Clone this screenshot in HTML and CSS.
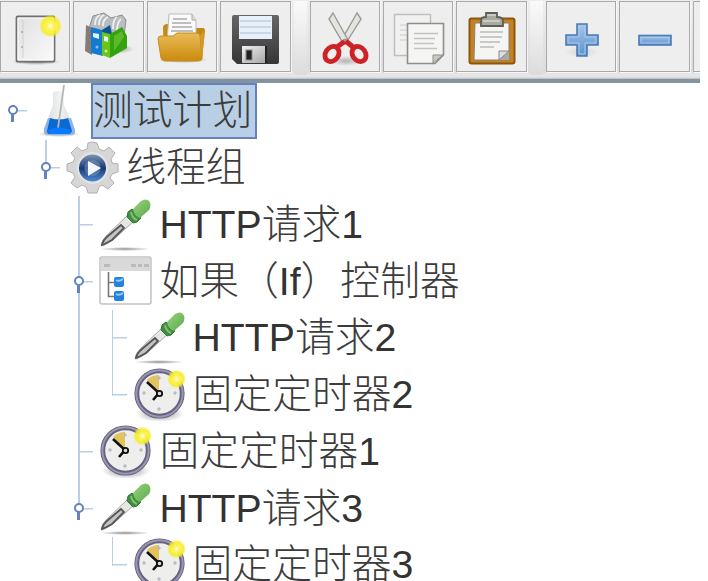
FILE: index.html
```html
<!DOCTYPE html>
<html lang="zh-CN">
<head>
<meta charset="UTF-8">
<meta name="viewport" content="width=device-width, initial-scale=1.0">
<title>测试计划</title>
<link rel="stylesheet" href="styles.css">
</head>
<body>

<svg class="sprites" width="0" height="0">
    <defs>
        <linearGradient id="paper" x1="0" y1="0" x2="1" y2="1"><stop offset="0" stop-color="#e0e0e0"/><stop offset="1" stop-color="#fafafa"/></linearGradient>
        <linearGradient id="dark" x1="0" y1="0" x2="0" y2="1"><stop offset="0" stop-color="#666"/><stop offset="1" stop-color="#363636"/></linearGradient>
        <linearGradient id="gold" x1="0" y1="0" x2="0" y2="1"><stop offset="0" stop-color="#e8bc58"/><stop offset="1" stop-color="#cb8a0c"/></linearGradient>
        <linearGradient id="metal" x1="0" y1="0" x2="1" y2="1"><stop offset="0" stop-color="#f0f0f0"/><stop offset="1" stop-color="#a5a5a5"/></linearGradient>
        <linearGradient id="blue" x1="0" y1="0" x2="0" y2="1"><stop offset="0" stop-color="#a5c5e8"/><stop offset="1" stop-color="#5b92cf"/></linearGradient>
        <linearGradient id="green" x1="0" y1="0" x2="1" y2="1"><stop offset="0" stop-color="#9ad47c"/><stop offset="1" stop-color="#5aa94e"/></linearGradient>
        <linearGradient id="glass" x1="0" y1="0" x2="1" y2="0"><stop offset="0" stop-color="#d5d7d8"/><stop offset=".5" stop-color="#f1f2f2"/><stop offset="1" stop-color="#d9dbdc"/></linearGradient>
        <linearGradient id="navy" x1="0" y1="0" x2="0" y2="1"><stop offset="0" stop-color="#8094b2"/><stop offset=".5" stop-color="#173a74"/><stop offset="1" stop-color="#4d8bd5"/></linearGradient>
        <radialGradient id="glow"><stop offset="0" stop-color="#fffff0"/><stop offset=".3" stop-color="#fff45a"/><stop offset=".75" stop-color="#f7ec28" stop-opacity=".9"/><stop offset="1" stop-color="#f7ec28" stop-opacity="0"/></radialGradient>
        <radialGradient id="shade"><stop offset="0" stop-color="#555" stop-opacity=".65"/><stop offset="1" stop-color="#555" stop-opacity="0"/></radialGradient>
    </defs>
    <symbol id="dropper" viewBox="0 0 53 53">
        <ellipse cx="26" cy="51" rx="25" ry="2" fill="url(#shade)"/>
        <path d="M29 17L35 23L14 42Q9 45 4 48L2 47Q3 42 8 37Z" fill="#e6e6e4" stroke="#aaa" stroke-width="1"/>
        <path d="M22 27L9 38Q4 42 3 47Q8 45 13 42L25 30Z" fill="#c4c4c2" stroke="#555" stroke-width="1.800"/>
        <path d="M29 14L33 11L42 20L38 24L34 25L28 19Z" fill="#3f8d3f" stroke="#35763a"/>
        <path d="M34 11L42 3Q47 0 50 3Q53 7 50 12L41 20Q35 18 34 11Z" fill="url(#green)"/>
        <path d="M32 14Q33 20 38 22" fill="none" stroke="#81bd75" stroke-width="2"/>
    </symbol>
    <symbol id="clock" viewBox="0 0 53 53">
        <ellipse cx="27" cy="46" rx="24" ry="8" fill="url(#shade)"/>
        <circle cx="26.500" cy="25.500" r="22.700" fill="#eeeeec" stroke="#65627f" stroke-width="4.800"/>
        <circle cx="26.500" cy="25.500" r="23.200" fill="none" stroke="#9897b4" stroke-width="2"/>
        <path d="M26 25L14 12Q19 7 26 7Z" fill="#e2c35c"/>
        <g fill="#bbb"><circle cx="26" cy="10" r="1.700"/><circle cx="42" cy="25" r="1.700"/><circle cx="26" cy="41" r="1.700"/><circle cx="11" cy="25" r="1.700"/></g>
        <path d="M14 14L26 25L20 32" fill="none" stroke="#111" stroke-width="2.600"/>
        <circle cx="26.500" cy="25.500" r="2.700" fill="#ddd" stroke="#111" stroke-width="1.800"/>
        <circle cx="43.500" cy="11" r="9.500" fill="url(#glow)"/>
    </symbol>
</svg>

<div class="app">
    <div class="toolbar">
        <button title="新建"><svg viewBox="0 0 70 70">
            <ellipse cx="36" cy="60" rx="24" ry="3" fill="url(#shade)"/>
            <rect x="16.500" y="14.500" width="38" height="45" rx="1" fill="url(#paper)" stroke="#707070" stroke-width="1.800"/>
            <path d="M18 16H53V58H18Z" fill="none" stroke="#fff"/>
            <path d="M23 18V56" stroke="#d0d0d0"/><circle cx="22" cy="30" r="1" fill="#aaa"/><circle cx="22" cy="45" r="1" fill="#aaa"/>
            <circle cx="50.500" cy="24" r="11.500" fill="url(#glow)"/>
        </svg></button>
        <button title="模板"><svg viewBox="0 0 70 70">
            <ellipse cx="41" cy="47" rx="20" ry="5" fill="url(#shade)"/>
            <path d="M17 23L20 14L31 11L38 16L49 13L53 18L51 34L28 36L15 31Z" fill="#b9bdc0" stroke="#8b8f92"/>
            <path d="M22 23Q22 15 27 13M26 23Q26 15 31 13M30 24Q30 17 35 15M40 27Q40 17 44 15M44 29Q44 20 48 17" fill="none" stroke="#f0f0f0" stroke-width="1.800"/>
            <path d="M13 23L19 26V53L12 49Z" fill="#857c78"/>
            <path d="M18 25L29 28L30 54L18 51Z" fill="#137bd0"/>
            <path d="M29 28L37 23L39 32L31 53Z" fill="#0c5594"/>
            <path d="M29 30L37 32V56L29 53Z" fill="#69c51c"/>
            <path d="M37 32L49 25L54 34V46L37 56Z" fill="#35a30d"/>
            <path d="M41 34L49 29L51 35L41 49Z" fill="#5aba2a"/>
            <path d="M20 31L26 32V37L20 35ZM31 34L35 35V40L31 39Z" fill="#e7f5fc"/>
            <circle cx="24" cy="45" r="1.500" fill="#7dc0ee"/><circle cx="33" cy="49" r="1.500" fill="#ccef9b"/>
        </svg></button>
        <button title="打开"><svg viewBox="0 0 70 70">
            <ellipse cx="36" cy="58" rx="25" ry="3" fill="url(#shade)"/>
            <path d="M16 25Q17 22 20 22H32L35 26H57L58 28L55 58H17Z" fill="#c58a16"/>
            <path d="M22 12H45L49 18V40H20Z" fill="#fafafa" stroke="#bbb"/>
            <path d="M26 17H40M25 21H44M25 25H45M24 29H46" stroke="#aaa" stroke-width="1.400"/>
            <path d="M45 12V18H49" fill="#ddd" stroke="#aaa"/>
            <path d="M11 37Q11 34 14 34H26L30 31H50Q53 31 53 34L55 57Q54 59 51 59H18Q15 59 14 56Z" fill="url(#gold)" stroke="#c58c20"/>
            <path d="M53 34L58 28L55 57" fill="#d49a26"/>
        </svg></button>
        <button title="保存"><svg viewBox="0 0 70 70">
            <path d="M12 15Q12 13 14 13H57Q59 13 59 15V60Q59 62 57 62H17L12 57Z" fill="url(#dark)"/>
            <rect x="19" y="14" width="33" height="23" fill="#e8f1fa"/>
            <path d="M20 19H51M20 25H51M20 31H51" stroke="#bed0e2" stroke-width="1.700"/>
            <rect x="22" y="44" width="24" height="17" fill="url(#metal)"/>
            <rect x="26" y="48" width="6" height="10" fill="#222" stroke="#888"/>
            <path d="M46 44V61" stroke="#222" stroke-width="2"/>
        </svg></button>
        <span class="separator"></span>
        <button title="剪切"><svg viewBox="0 0 70 70">
            <ellipse cx="36" cy="59" rx="16" ry="5" fill="url(#shade)" opacity=".6"/>
            <path d="M47 11L51 17L36 41L31 39Z" fill="#e4e4e0" stroke="#999b98" stroke-width="1.400"/>
            <path d="M23 11L19 17L33 41L38 38Z" fill="#e4e4e0" stroke="#999b98" stroke-width="1.400"/>
            <g fill="none" stroke="#cf2226" stroke-width="4.800"><ellipse cx="22" cy="52" rx="6.500" ry="8" transform="rotate(35 22 52)"/><ellipse cx="49" cy="52" rx="6.500" ry="8" transform="rotate(-35 49 52)"/></g>
            <path d="M27 45L34 40L37 40L43 45" fill="none" stroke="#cf2226" stroke-width="5"/>
            <circle cx="35" cy="38" r="1.500" fill="#999"/>
        </svg></button>
        <button title="复制"><svg viewBox="0 0 70 70">
            <rect x="11.500" y="12.500" width="36" height="41" fill="#f1f1f1" stroke="#bfbfbd" stroke-width="1.500"/>
            <path d="M17 23H25M17 28H24M17 33H25M17 38H25" stroke="#ccc"/>
            <path d="M24.500 21.500H60.500V53L52 61.500H24.500Z" fill="#f5f5f4" stroke="#8d8f8a" stroke-width="1.600"/>
            <path d="M31 31.500H55M31 36.500H52M31 41.500H51M31 46.500H54" stroke="#c2c2c0" stroke-width="1.500"/>
            <path d="M50 61V53H60Z" fill="#c7c9c4" stroke="#8d8f8a"/>
        </svg></button>
        <button title="粘贴"><svg viewBox="0 0 70 70">
            <rect x="13.500" y="16.500" width="45" height="45" rx="2" fill="#c58222" stroke="#8b5711" stroke-width="2"/>
            <path d="M19 21H53V58H18Z" fill="#f5f5f4" stroke="#8b8170"/>
            <path d="M24 30H47M24 35H46M24 40H44M24 45H38" stroke="#bbb" stroke-width="1.500"/>
            <path d="M43 58V49H53V58Z" fill="#aaa"/><path d="M43 58L53 49H43Z" fill="#ddd" stroke="#888"/>
            <path d="M25 18Q25 15 30 15V11H41V15Q47 15 47 19V24H25Z" fill="#a8aaa1" stroke="#5e6058" stroke-width="1.800"/>
            <path d="M31 13H40M27 19H44" stroke="#d3d5cd" stroke-width="1.500"/>
        </svg></button>
        <span class="separator"></span>
        <button title="展开"><svg viewBox="0 0 70 70">
            <ellipse cx="36" cy="50" rx="17" ry="6" fill="url(#shade)" opacity=".25"/>
            <path d="M31 22H41V33H52V43H41V54H31V43H20V33H31Z" fill="url(#blue)" stroke="#4a7ab4" stroke-width="1.600"/>
            <path d="M33 24H39V35H50V41H39V52H33V41H22V35H33Z" fill="none" stroke="#a9c8ea" stroke-width="1"/>
        </svg></button>
        <button title="折叠"><svg viewBox="0 0 70 70">
            <rect x="20" y="33.500" width="32" height="9.500" fill="url(#blue)" stroke="#4a7ab4" stroke-width="1.600"/>
            <rect x="22" y="35.500" width="28" height="5.500" fill="none" stroke="#a9c8ea"/>
        </svg></button>
        <button title="切换"></button>
    </div>

    <ul class="tree">
        <li>
            <div class="row root">
                <span class="branch"><i class="handle"></i></span>
                <svg class="icon" viewBox="0 0 53 53">
                    <ellipse cx="26" cy="50" rx="21" ry="3" fill="url(#shade)"/>
                    <path d="M20 8Q25 6 30 8L31 21L42 46Q43 51 38 51H15Q10 51 11 45L20 21Z" fill="url(#glass)"/>
                    <path d="M15 34Q26 37 38 34L42 46Q43 51 38 51H15Q10 51 11 45Z" fill="#8db2e6"/>
                    <path d="M17 34Q26 37 35 34L39 47Q38 50 35 50H17Q14 50 14 47Z" fill="#0968d2"/>
                    <path d="M31 1L27 30L25 44" fill="none" stroke="#b5b5b5" stroke-width="1.800"/>
                    <path d="M15 46Q26 41 38 46L36 50H17Z" fill="#087aff"/>
                </svg>
                <span class="label selected">测试计划</span>
            </div>
            <ul>
                <li>
                    <div class="row">
                        <span class="branch"><i class="handle"></i></span>
                        <svg class="icon" viewBox="0 0 53 53">
                            <path d="M21 8L22 2Q26 0 31 2L33 8L38 10L43 6L49 12L45 18L46 22L52 23V31L46 33L44 37L48 42L42 48L36 44L33 46L31 52H22L20 46L16 44L11 47L5 42L9 36L7 32L1 30V23L7 21L9 17L5 12L11 6L16 10Z" fill="#d6d6d6" stroke="#b2b2b2" stroke-linejoin="round"/>
                            <circle cx="26.500" cy="27" r="16" fill="#e2e2e2"/>
                            <circle cx="26.500" cy="27" r="13.500" fill="url(#navy)"/>
                            <circle cx="26.500" cy="27" r="8" fill="#7595c2" opacity=".55"/>
                            <path d="M22 20L35 27L22 35Z" fill="#f3f6fa"/>
                        </svg>
                        <span class="label"><b>线程组</b></span>
                    </div>
                    <ul>
                        <li>
                            <div class="row">
                                <span class="branch"></span>
                                <svg class="icon"><use href="#dropper"/></svg>
                                <span class="label">HTTP<b>请求</b>1</span>
                            </div>
                        </li>
                        <li>
                            <div class="row">
                                <span class="branch"><i class="handle"></i></span>
                                <svg class="icon" viewBox="0 0 53 53">
                                    <rect x="1" y="2" width="51" height="47" rx="2" fill="#fff" stroke="#c2c2c2" stroke-width="1.500"/>
                                    <path d="M2 3H51V16H2Z" fill="#d9d9d9"/>
                                    <path d="M5 10.500H11M32 10.500H37M39 10.500H43M45 10.500H50" stroke="#bbb" stroke-width="3"/>
                                    <path d="M9.500 17V41.500H16M9.500 27.500H16" fill="none" stroke="#777" stroke-width="1.600"/>
                                    <rect x="15" y="22" width="10" height="10" rx="2" fill="#2581e0"/><rect x="15" y="36" width="10" height="10" rx="2" fill="#2581e0"/>
                                    <path d="M17 25Q20 27 24 24M17 39Q20 41 24 38" fill="none" stroke="#9dccfa" stroke-width="2"/>
                                </svg>
                                <span class="label"><b>如果（</b>If<b>）控制器</b></span>
                            </div>
                            <ul>
                                <li>
                                    <div class="row">
                                        <span class="branch"></span>
                                        <svg class="icon"><use href="#dropper"/></svg>
                                        <span class="label">HTTP<b>请求</b>2</span>
                                    </div>
                                </li>
                                <li>
                                    <div class="row">
                                        <span class="branch"></span>
                                        <svg class="icon"><use href="#clock"/></svg>
                                        <span class="label"><b>固定定时器</b>2</span>
                                    </div>
                                </li>
                            </ul>
                        </li>
                        <li>
                            <div class="row">
                                <span class="branch"></span>
                                <svg class="icon"><use href="#clock"/></svg>
                                <span class="label"><b>固定定时器</b>1</span>
                            </div>
                        </li>
                        <li>
                            <div class="row">
                                <span class="branch"><i class="handle"></i></span>
                                <svg class="icon"><use href="#dropper"/></svg>
                                <span class="label">HTTP<b>请求</b>3</span>
                            </div>
                            <ul>
                                <li>
                                    <div class="row">
                                        <span class="branch"></span>
                                        <svg class="icon"><use href="#clock"/></svg>
                                        <span class="label"><b>固定定时器</b>3</span>
                                    </div>
                                </li>
                            </ul>
                        </li>
                    </ul>
                </li>
            </ul>
        </li>
    </ul>
</div>

</body>
</html>
```
FILE: styles.css
```css
body {
    margin: 0;
    background: #fff;
    font-family: "Liberation Sans", "Noto Sans CJK SC", sans-serif;
}

.sprites {
    position: absolute;
}

.app {
    width: 700px;
    height: 581px;
    overflow: hidden;
}

.toolbar {
    display: flex;
    gap: 3px;
    box-sizing: border-box;
    height: 83px;
    padding-top: 1px;
    border-bottom: 4px solid #8293a2;
    background: linear-gradient(#eee, #dcdcdc 72px, #e6e6e6 74px, #e6e6e6 77px, #bbb);
    overflow: hidden;
}

.toolbar button {
    flex: none;
    box-sizing: border-box;
    width: 70.4px;
    height: 71px;
    padding: 0;
    border: 1.5px solid #a9a9a9;
    background: #eee;
    box-shadow: 1px 1px 0 #f8f8f8;
}

.toolbar svg {
    display: block;
    width: 70px;
    height: 70px;
    margin: -1px;
}

.separator {
    flex: none;
    width: 13px;
    height: 74px;
    background: linear-gradient(#fafafa, #dcdcdc);
}

.tree,
.tree ul {
    margin: 0;
    padding: 0;
    list-style: none;
}

.tree {
    padding-left: 12px;
}

.tree ul {
    margin-left: 33.2px;
}

.tree li {
    position: relative;
}

/* vertical guide lines */
.tree ul > li::before {
    content: "";
    position: absolute;
    left: 0;
    top: 0;
    width: 1.5px;
    height: 100%;
    background: #b8cfe5;
}

.tree ul > li:last-child::before {
    height: 29px;
}

.row {
    display: flex;
    align-items: center;
    height: 56.74px;
}

.branch {
    position: relative;
    flex: none;
    width: 21px;
    height: 2px;
    background: linear-gradient(#b8cfe5, #b8cfe5) 0 0 / 15px 1.5px no-repeat;
}

.handle {
    position: absolute;
    left: -4.5px;
    top: -5px;
    box-sizing: border-box;
    width: 10px;
    height: 10px;
    border: 2.6px solid #6382bf;
    border-radius: 50%;
    background: #fff;
}

.handle::after {
    content: "";
    position: absolute;
    left: 1px;
    top: 6px;
    width: 3px;
    height: 9px;
    background: #6382bf;
}

.icon {
    flex: none;
    width: 53px;
    height: 53px;
    margin-top: -1px;
}

.label {
    box-sizing: border-box;
    height: 56px;
    margin-left: 5px;
    border: 2px solid transparent;
    color: #333;
    font-size: 39.2px;
    line-height: 51px;
    white-space: nowrap;
}

.label b,
.selected {
    color: #3c3c3c;
    font-size: 39.8px;
    font-weight: 300;
}

.selected {
    width: 166px;
    border-color: #6382bf;
    background: #b8cfe5;
}
```
